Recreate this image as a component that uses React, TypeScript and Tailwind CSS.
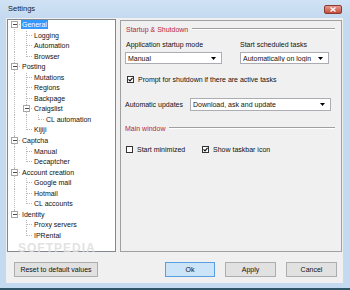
import React from "react";

type Row = { level: number; label: string; exp?: boolean; sel?: boolean };

const rows: Row[] = [
  { level: 0, label: "General", exp: true, sel: true },
  { level: 1, label: "Logging" },
  { level: 1, label: "Automation" },
  { level: 1, label: "Browser" },
  { level: 0, label: "Posting", exp: true },
  { level: 1, label: "Mutations" },
  { level: 1, label: "Regions" },
  { level: 1, label: "Backpage" },
  { level: 1, label: "Craigslist", exp: true },
  { level: 2, label: "CL automation" },
  { level: 1, label: "Kijiji" },
  { level: 0, label: "Captcha", exp: true },
  { level: 1, label: "Manual" },
  { level: 1, label: "Decaptcher" },
  { level: 0, label: "Account creation", exp: true },
  { level: 1, label: "Google mail" },
  { level: 1, label: "Hotmail" },
  { level: 1, label: "CL accounts" },
  { level: 0, label: "Identity", exp: true },
  { level: 1, label: "Proxy servers" },
  { level: 1, label: "IPRental" },
];

// does the branch at level `a` continue below row i?
function continues(i: number, a: number) {
  for (let j = i + 1; j < rows.length; j++) {
    if (rows[j].level < a) return false;
    if (rows[j].level === a) return true;
  }
  return false;
}

const ROW_H = 10.55;

function TreeLines({ i }: { i: number }) {
  const { level, exp } = rows[i];
  const w = 13 + 12 * level;
  const gx = 6.5 + 12 * level;
  const mid = 4.5;
  const stroke = "#b9b9b9";
  const lines: React.ReactNode[] = [];
  for (let a = 0; a < level; a++) {
    if (continues(i, a)) {
      const x = 6.5 + 12 * a;
      lines.push(<line key={"a" + a} x1={x} y1={0} x2={x} y2={ROW_H} stroke={stroke} strokeDasharray="1 1" />);
    }
  }
  const first = i === 0;
  lines.push(<line key="up" x1={gx} y1={first ? mid : 0} x2={gx} y2={continues(i, level) ? ROW_H : mid} stroke={stroke} strokeDasharray="1 1" />);
  lines.push(<line key="h" x1={gx} y1={mid} x2={gx + 6} y2={mid} stroke={stroke} strokeDasharray="1 1" />);
  return (
    <svg width={w} height={ROW_H} className="shrink-0 overflow-visible" shapeRendering="crispEdges">
      {lines}
      {exp && (
        <g>
          <rect x={gx - 3} y={1.5} width={6} height={6} fill="#ffffff" stroke="#a6a6a6" />
          <line x1={gx - 1.5} y1={mid} x2={gx + 2} y2={mid} stroke="#4a4a4a" />
        </g>
      )}
    </svg>
  );
}

function Combo({ value, className }: { value: string; className: string }) {
  return (
    <div className={`flex items-center bg-white border border-[#abadb3] pl-[2px] pr-[5px] ${className}`}>
      <span className="flex-1 truncate leading-none">{value}</span>
      <svg width="5" height="3" viewBox="0 0 5 3">
        <path d="M0 0H5L2.5 3Z" fill="#000" />
      </svg>
    </div>
  );
}

function Check({ checked }: { checked: boolean }) {
  return (
    <div className="w-[7px] h-[7px] border border-[#333] bg-white flex items-center justify-center shrink-0">
      {checked && (
        <svg width="5" height="5" viewBox="0 0 5 5">
          <path d="M0.5 2.3L2 3.8L4.6 0.8" fill="none" stroke="#111" strokeWidth="1.2" />
        </svg>
      )}
    </div>
  );
}

function Heading({ text }: { text: string }) {
  return (
    <div className="flex items-center h-[8px] pr-[6px]">
      <span className="text-[#b5283c] leading-none">{text}</span>
      <div className="flex-1 ml-[4px] border-t border-[#a0a0a0] border-b-white border-b h-0" />
    </div>
  );
}

function Btn({ children, className }: { children: React.ReactNode; className: string }) {
  return (
    <div className={`h-[15px] flex items-center justify-center border leading-none ${className}`}>
      {children}
    </div>
  );
}

export default function App() {
  return (
    <div
      className="relative w-[350px] h-[290px] overflow-hidden bg-[#c4daf0] text-[7px] text-[#111]"
      style={{ fontFamily: '"Liberation Sans", Arial, sans-serif' }}
    >
      {/* title bar */}
      <div className="h-[18px] flex items-center pl-[8px] pr-[8px] bg-gradient-to-b from-[#d0e2f4] to-[#c4daf0]">
        <span className="flex-1 text-[7.5px] text-[#1a1a1a] leading-none">Settings</span>
        <div className="w-[18px] h-[9px] rounded-[2px] border border-[#8d3a32] bg-gradient-to-b from-[#e39a8d] to-[#c44c3b] flex items-center justify-center">
          <svg width="6" height="5" viewBox="0 0 6 5">
            <path d="M0.5 0.5L5.5 4.5M5.5 0.5L0.5 4.5" stroke="#fff" strokeWidth="1.3" />
          </svg>
        </div>
      </div>

      {/* client area */}
      <div className="ml-[6px] w-[337px] h-[265px] bg-[#f0f0f0] flex flex-col">
        <div className="flex items-start">
          {/* tree */}
          <div className="ml-[1px] mt-[1px] w-[109px] h-[233px] bg-white border border-[#828790] overflow-hidden">
            {rows.map((r, i) => (
              <div key={i} className="flex items-start" style={{ height: ROW_H }}>
                <TreeLines i={i} />
                <span
                  className={`h-[9px] leading-[9px] px-[1px] whitespace-nowrap ${r.sel ? "bg-[#3399ff] text-white" : ""}`}
                >
                  {r.label}
                </span>
              </div>
            ))}
          </div>

          {/* settings panel */}
          <div className="ml-[4px] mt-[2px] w-[222px] h-[232px] border border-[#a0a0a0] pl-[5px] flex flex-col">
            <div className="mt-[4px]">
              <Heading text="Startup & Shutdown" />
            </div>
            <div className="mt-[7px] flex h-[8px] items-center leading-none">
              <span className="w-[114px]">Application startup mode</span>
              <span>Start scheduled tasks</span>
            </div>
            <div className="mt-[4px] flex -ml-[1px]">
              <Combo value="Manual" className="w-[97px] h-[12px]" />
              <Combo value="Automatically on login" className="ml-[18px] w-[89px] h-[12px]" />
            </div>
            <div className="mt-[11px] flex items-center h-[9px] ml-[1px] gap-[4px]">
              <Check checked />
              <span className="leading-none">Prompt for shutdown if there are active tasks</span>
            </div>
            <div className="mt-[14px] flex items-center -ml-[1px]">
              <span className="w-[65px] leading-none">Automatic updates</span>
              <Combo value="Download, ask and update" className="w-[141px] h-[13px]" />
            </div>
            <div className="mt-[13px] -ml-[1px]">
              <Heading text="Main window" />
            </div>
            <div className="mt-[13px] flex items-center h-[8px]">
              <div className="w-[76px] flex items-center gap-[4px]">
                <Check checked={false} />
                <span className="leading-none">Start minimized</span>
              </div>
              <div className="flex items-center gap-[4px]">
                <Check checked />
                <span className="leading-none">Show taskbar icon</span>
              </div>
            </div>
          </div>
        </div>

        {/* buttons */}
        <div className="mt-[10px] flex items-center pr-[6px]">
          <Btn className="ml-[8px] w-[84px] bg-[#e1e1e1] border-[#adadad]">Reset to default values</Btn>
          <div className="flex-1" />
          <Btn className="w-[50px] bg-[#cce4f7] border-[#5aa0e0]">Ok</Btn>
          <Btn className="ml-[10px] w-[51px] bg-[#e1e1e1] border-[#adadad]">Apply</Btn>
          <Btn className="ml-[10px] w-[51px] bg-[#e1e1e1] border-[#adadad]">Cancel</Btn>
        </div>
      </div>

      {/* bottom edge */}
      <div className="absolute left-0 right-0 bottom-0 h-[2px] bg-[#2f5668]" />

      {/* watermark */}
      <div className="absolute left-[18px] top-[242px] text-[12px] font-bold tracking-[1px] text-[#dcdcdc] opacity-80 leading-none pointer-events-none">
        SOFTPEDIA
      </div>
    </div>
  );
}
